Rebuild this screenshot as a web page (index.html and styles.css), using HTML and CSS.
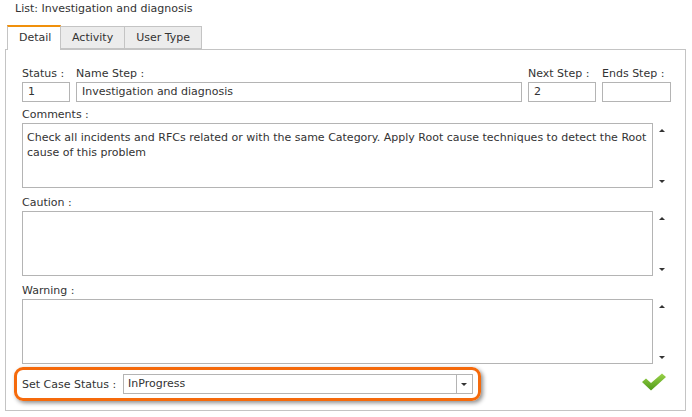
FILE: index.html
```html
<!DOCTYPE html>
<html>
<head>
<meta charset="utf-8">
<link rel="stylesheet" href="styles.css">
</head>
<body>
<div class="title">List: Investigation and diagnosis</div>
<div class="tabs">
  <div class="tab active">Detail</div>
  <div class="tab">Activity</div>
  <div class="tab">User Type</div>
</div>
<div class="panel">
  <div class="toprow">
    <div class="lbl">Status :</div>
    <div class="lbl">Name Step :</div>
    <div class="lbl">Next Step :</div>
    <div class="lbl">Ends Step :</div>
    <div class="inp">1</div>
    <div class="inp">Investigation and diagnosis</div>
    <div class="inp">2</div>
    <div class="inp"></div>
  </div>
  <div class="lbl block">Comments :</div>
  <div class="area-row">
    <div class="area">Check all incidents and RFCs related or with the same Category. Apply Root cause techniques to detect the Root cause of this problem</div>
    <div class="scroll"><span class="up"></span><span class="down"></span></div>
  </div>
  <div class="lbl block">Caution :</div>
  <div class="area-row">
    <div class="area"></div>
    <div class="scroll"><span class="up"></span><span class="down"></span></div>
  </div>
  <div class="lbl block">Warning :</div>
  <div class="area-row">
    <div class="area"></div>
    <div class="scroll"><span class="up"></span><span class="down"></span></div>
  </div>
  <div class="bottom">
    <div class="case">
      <span class="case-lbl">Set Case Status :</span>
      <div class="select"><span class="val">InProgress</span><span class="btn"><span class="down"></span></span></div>
    </div>
    <svg class="check" width="26" height="18" viewBox="0 0 26 18">
      <defs><linearGradient id="g" x1="0" y1="0" x2="0" y2="1"><stop offset="0" stop-color="#9ad24a"/><stop offset="1" stop-color="#4f9a18"/></linearGradient></defs>
      <path d="M1 9 L5 5.5 L10 10 L21 0.5 L25 4 L10 17.5 Z" fill="url(#g)"/>
    </svg>
  </div>
</div>
</body>
</html>
```
FILE: styles.css
```css
* { box-sizing: border-box; }
body {
  margin: 0;
  width: 692px;
  height: 417px;
  background: #fff;
  font-family: "DejaVu Sans", Verdana, sans-serif;
  font-size: 11px;
  color: #333;
  overflow: hidden;
}
.title {
  padding: 2px 0 0 15px;
  height: 25px;
  line-height: 14px;
}
.tabs {
  display: flex;
  margin-left: 7px;
  height: 24px;
  position: relative;
  z-index: 1;
}
.tab {
  height: 23px;
  margin-top: 1px;
  padding: 0 11px;
  line-height: 21px;
  background: #ececec;
  border: 1px solid #c4c4c4;
  border-left: none;
  color: #333;
}
.tab.active {
  margin-top: 0;
  height: 25px;
  background: #fff;
  border: none;
  border-top: 2px solid #f0900c;
  border-left: 1px solid #c4c4c4;
  border-right: 1px solid #c4c4c4;
  padding: 0 11px;
  line-height: 22px;
  width: 54px;
}
.panel {
  margin-left: 5px;
  width: 681px;
  height: 362px;
  border: 1px solid #c4c4c4;
  padding: 16px 0 0 16px;
}
.toprow {
  display: grid;
  grid-template-columns: 48px 446px 68px 69px;
  column-gap: 6px;
  row-gap: 2px;
  width: 649px;
}
.lbl {
  line-height: 14px;
  height: 14px;
  white-space: nowrap;
}
.toprow .lbl { margin-top: 1px; margin-bottom: -1px; }
.inp {
  height: 20px;
  border: 1px solid #b4b4b4;
  padding: 0 5px;
  line-height: 18px;
}
.lbl.block {
  margin-top: 6px;
  height: 14px;
  margin-bottom: 1px;
}
.area-row + .lbl.block {
  margin-top: 8px;
}
.area-row {
  display: flex;
}
.area {
  width: 631px;
  height: 65px;
  border: 1px solid #b4b4b4;
  padding: 6px 4px;
  line-height: 15px;
}
.scroll {
  width: 18px;
  height: 65px;
  position: relative;
}
.up, .down {
  position: absolute;
  left: 6px;
  width: 0; height: 0;
  border-left: 3px solid transparent;
  border-right: 3px solid transparent;
}
.up { top: 6px; border-bottom: 3px solid #333; }
.down { bottom: 5px; border-top: 3px solid #333; }
.bottom {
  display: flex;
  align-items: flex-start;
  margin-top: 3px;
  margin-left: -8px;
}
.case {
  width: 467px;
  height: 34px;
  border: 3px solid #f56a0c;
  border-radius: 9px;
  box-shadow: 2px 2px 4px rgba(0,0,0,0.45);
  display: flex;
  align-items: center;
  padding-left: 5px;
}
.case-lbl {
  width: 101px;
  white-space: nowrap;
}
.select {
  width: 350px;
  height: 20px;
  border: 1px solid #b4b4b4;
  display: flex;
}
.select .val {
  flex: 1;
  padding-left: 4px;
  line-height: 18px;
}
.select .btn {
  width: 16px;
  border-left: 1px solid #b4b4b4;
  position: relative;
}
.select .btn .down { left: 4px; bottom: 7px; }
.check {
  margin-left: 160px;
  margin-top: 6px;
}
```
